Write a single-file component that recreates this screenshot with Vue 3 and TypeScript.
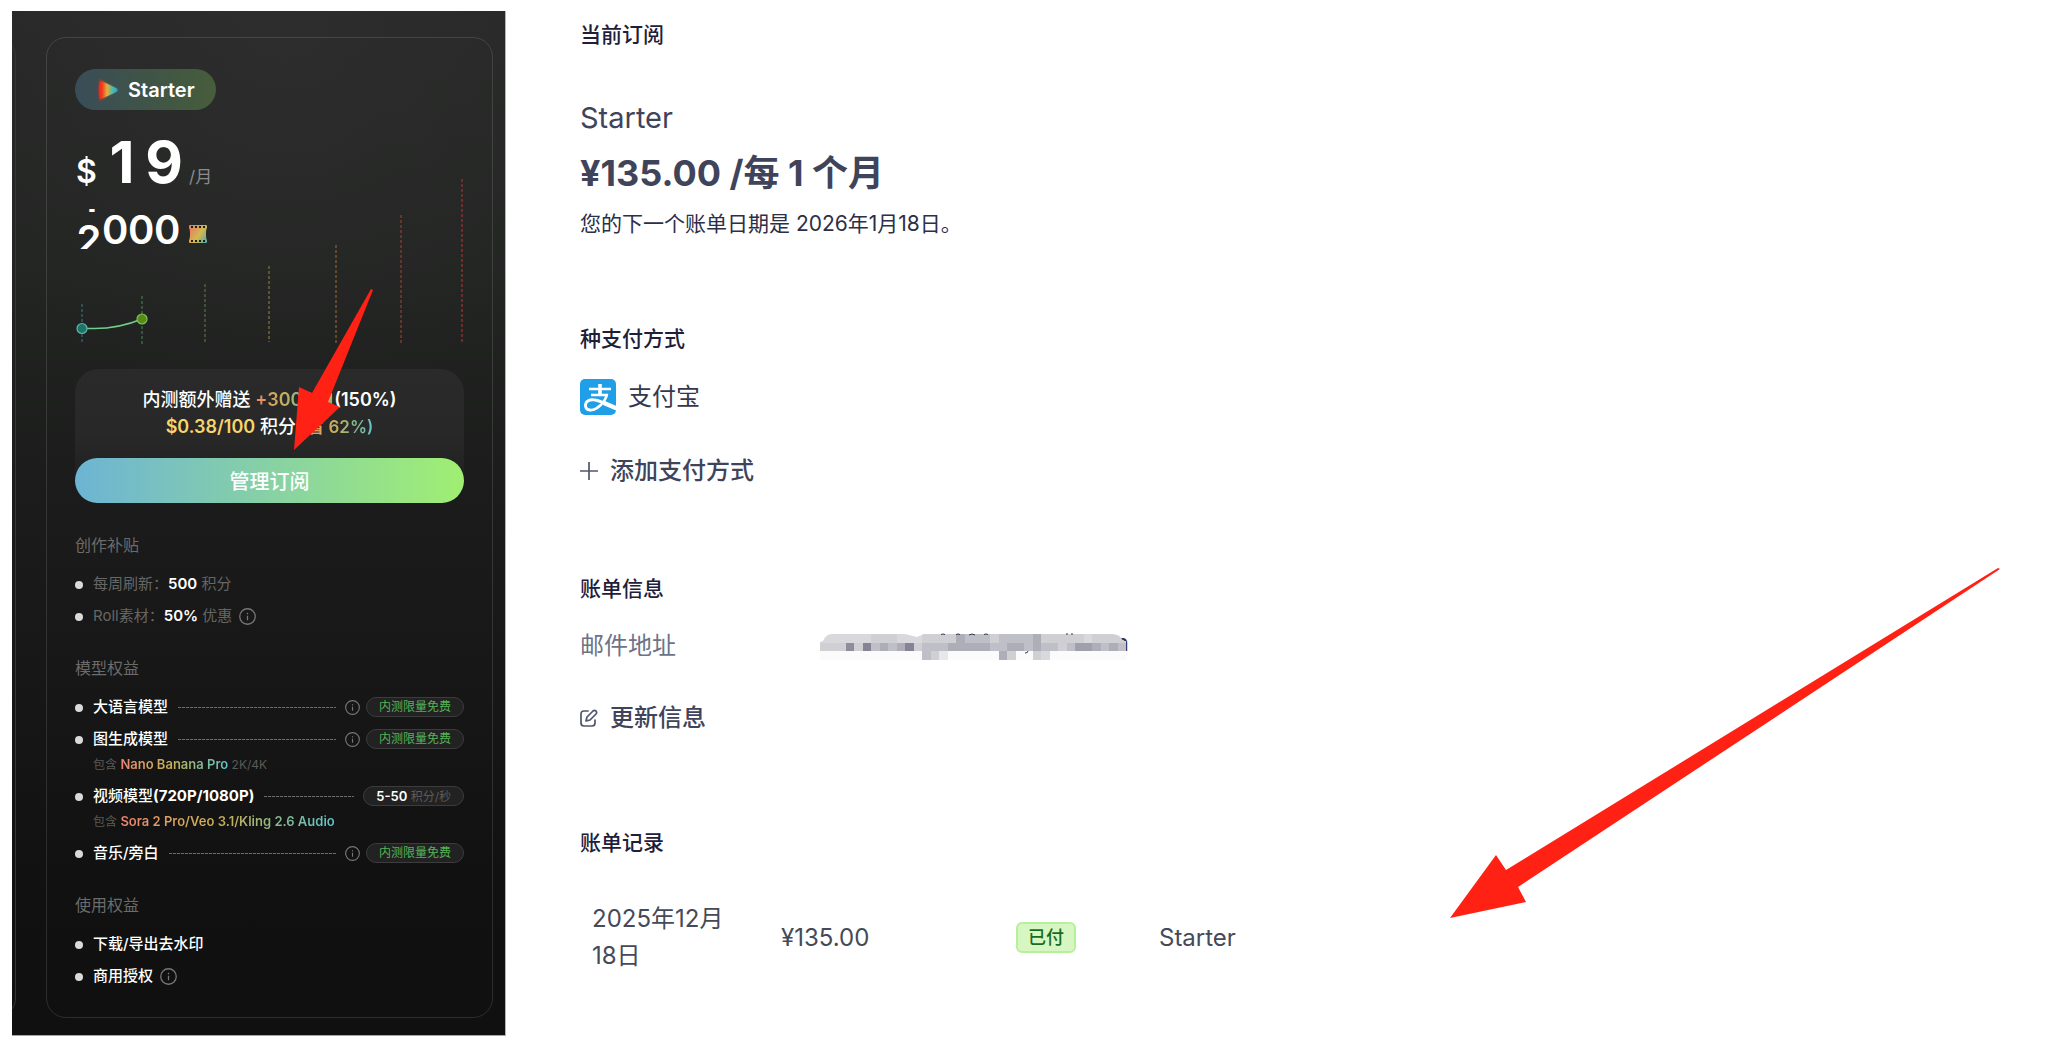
<script setup lang="ts">
interface Benefit {
  label: string
  spec?: string
  badge?: string
  rate?: string
  include?: string
  suffix?: string
}

interface Guide {
  x: number
  top: number
  bottom: number
  color: string
}

// Each wheel holds the digits stacked in one column; offset is how far it has rolled.
const wheels = [
  { digits: ['1', '2'], offset: -32 },
  { digits: ['0'], offset: 0 },
  { digits: ['0'], offset: 0 },
  { digits: ['0'], offset: 0 },
]

const guides: Guide[] = [
  { x: 7, top: 125, bottom: 163, color: '#2f5a66' },
  { x: 67, top: 117, bottom: 165, color: '#3c6440' },
  { x: 130, top: 105, bottom: 165, color: '#4c5c38' },
  { x: 194, top: 87, bottom: 163, color: '#6b6236' },
  { x: 261, top: 66, bottom: 165, color: '#74502f' },
  { x: 326, top: 36, bottom: 165, color: '#763a30' },
  { x: 387, top: 0, bottom: 164, color: '#86302c' },
]

const models: Benefit[] = [
  { label: '大语言模型', badge: '内测限量免费' },
  { label: '图生成模型', badge: '内测限量免费', include: 'Nano Banana Pro', suffix: '2K/4K' },
  { label: '视频模型', spec: '(720P/1080P)', rate: '5-50', include: 'Sora 2 Pro/Veo 3.1/Kling 2.6 Audio' },
  { label: '音乐/旁白', badge: '内测限量免费' },
]

// Brightness level per block of the redacted address, 0 = empty, 9 = darkest.
const mosaicRows = [
  '222222333222333354443444453333323333',
  '333738454583444555554455454434665454',
  '000000000000431000000530032000000000',
]
const shades = ['#fbfbfc', '#e8e8eb', '#d9d9dd', '#cfcfd4', '#bfbfc8', '#aeaeb8', '#a09fac', '#8e8d9b', '#858394', '#777']
const mosaic = mosaicRows.flatMap((row, r) =>
  row.split('').map((c, i) => ({
    x: Math.round((i * 306) / 36),
    y: 1 + r * 8 + (r > 0 ? 1 : 0),
    fill: shades[Number(c)],
  })),
)
</script>

<template>
  <div class="page">
    <aside class="panel">
      <div class="neighbour"></div>
      <section class="card">
        <div class="plan">
          <svg width="24" height="26" viewBox="0 0 24 26" aria-hidden="true">
            <defs>
              <linearGradient id="play" x1="0" x2="1">
                <stop offset="0" stop-color="#f0201c" />
                <stop offset="0.2" stop-color="#f0401f" />
                <stop offset="0.45" stop-color="#e8ae3c" />
                <stop offset="0.7" stop-color="#5fb89a" />
                <stop offset="1" stop-color="#22a9d8" />
              </linearGradient>
              <filter id="glow" x="-30%" y="-30%" width="160%" height="160%">
                <feGaussianBlur stdDeviation="1.3" />
              </filter>
            </defs>
            <path d="M3 2 Q7 3 11 7 L21 12 Q23 13 21 14 L11 19 Q7 23 3 24 Z" fill="url(#play)" opacity="0.6" filter="url(#glow)" />
            <path d="M4 4 Q8 5 20 11 Q23 13 20 15 Q8 21 4 22 Q1 13 4 4 Z" fill="url(#play)" />
          </svg>
          <span>Starter</span>
        </div>

        <div class="hero">
          <svg class="chart" viewBox="0 0 389 165" aria-hidden="true">
            <line
              v-for="g in guides"
              :key="g.x"
              :x1="g.x"
              :x2="g.x"
              :y1="g.top"
              :y2="g.bottom"
              :stroke="g.color"
              stroke-width="1.6"
              stroke-dasharray="3 2"
            />
            <path d="M7 149 Q38 152 67 140" fill="none" stroke="#6fd08c" stroke-width="1.5" />
            <circle cx="7" cy="149.500" r="5" fill="#1d7565" stroke="#62b3b3" stroke-width="1.2" />
            <circle cx="67" cy="140" r="5" fill="#588a17" stroke="#7cc45a" stroke-width="1.2" />
          </svg>
          <div class="price">
            <span class="currency">$</span>
            <span class="amount"><b>1</b><b>9</b></span>
            <span class="period">/月</span>
          </div>
          <div class="credits">
            <span v-for="(w, i) in wheels" :key="i" class="wheel">
              <span class="strip" :style="{ marginTop: w.offset + 'px' }">
                <i v-for="d in w.digits" :key="d">{{ d }}</i>
              </span>
            </span>
            <svg class="film" width="18" height="20" viewBox="0 0 18 20" aria-hidden="true">
              <defs>
                <linearGradient id="film" x1="0" y1="0.2" x2="1" y2="0.9">
                  <stop offset="0" stop-color="#e27f62" />
                  <stop offset="0.55" stop-color="#d3b950" />
                  <stop offset="1" stop-color="#5aa9a6" />
                </linearGradient>
              </defs>
              <path d="M1 1 H17 Q18 1 18 2 V4 Q17 5 17 10 Q17 15 18 16 V18 Q18 19 17 19 H1 Q0 19 0 18 V16 Q1 15 1 10 Q1 5 0 4 V2 Q0 1 1 1Z" fill="url(#film)" />
              <path d="M2 3h2M6 3h2M10 3h2M14 3h2M2 17h2M6 17h2M10 17h2M14 17h2" stroke="#1f1d18" stroke-width="2" />
            </svg>
          </div>
        </div>

        <div class="bonus">
          <p>
            内测额外赠送 <span class="num rainbow">+3000</span>
            <svg class="reel" width="18" height="18" viewBox="0 0 18 20" aria-hidden="true"><rect y="1" width="18" height="18" rx="1" fill="url(#film)" /></svg>
            <span class="num">(150%)</span>
          </p>
          <p><span class="num gold">$0.38/100</span> 积分 <span class="rainbow saving">(省 62%)</span></p>
          <button type="button" class="manage">管理订阅</button>
        </div>

        <h3>创作补贴</h3>
        <ul>
          <li><div class="row muted">每周刷新：<strong>500</strong> 积分</div></li>
          <li>
            <div class="row muted">Roll素材：<strong>50%</strong> 优惠<svg class="info" width="17" height="17" viewBox="0 0 16 16"><circle cx="8" cy="8" r="7.300" /><path d="M8 7.200V11.500M8 4.500V5.800" /></svg></div>
          </li>
        </ul>

        <h3>模型权益</h3>
        <ul>
          <li v-for="m in models" :key="m.label">
            <div class="row">
              <span>{{ m.label }}<b v-if="m.spec">{{ m.spec }}</b></span>
              <span class="leader"></span>
              <svg v-if="m.badge" class="info small" width="15" height="15" viewBox="0 0 16 16"><circle cx="8" cy="8" r="7.300" /><path d="M8 7.200V11.500M8 4.500V5.800" /></svg>
              <span v-if="m.badge" class="badge free">{{ m.badge }}</span>
              <span v-else class="badge"><strong>{{ m.rate }}</strong> 积分/秒</span>
            </div>
            <p v-if="m.include" class="include">
              包含 <b class="rainbow">{{ m.include }}</b> {{ m.suffix }}
            </p>
          </li>
        </ul>

        <h3>使用权益</h3>
        <ul>
          <li><div class="row">下载/导出去水印</div></li>
          <li>
            <div class="row">商用授权<svg class="info" width="17" height="17" viewBox="0 0 16 16"><circle cx="8" cy="8" r="7.300" /><path d="M8 7.200V11.500M8 4.500V5.800" /></svg></div>
          </li>
        </ul>
      </section>
    </aside>

    <main class="billing">
      <section>
        <h2>当前订阅</h2>
        <p class="product">Starter</p>
        <p class="cost">¥135.00 /每 1 个月</p>
        <p class="next">您的下一个账单日期是 2026年1月18日。</p>
      </section>

      <section>
        <h2>种支付方式</h2>
        <div class="method">
          <svg width="36" height="36" viewBox="0 0 36 36" aria-hidden="true">
            <defs><clipPath id="tile"><rect width="36" height="36" rx="5" /></clipPath></defs>
            <g clip-path="url(#tile)">
              <rect width="36" height="36" fill="#1f9fe8" />
              <g fill="none" stroke="#fff" stroke-width="2.600">
                <path d="M9 10H31M11 16H28" />
                <path d="M20 5V16" stroke-width="3.600" />
                <path d="M27 15C26 20 22 26 17 29C13 32 6 32 5.500 27C5 22 10 20 15 21C21 22 28 26 38 30" stroke-width="2.800" />
                <path d="M24 24L38 30" stroke-width="4.400" />
              </g>
            </g>
          </svg>
          <span>支付宝</span>
        </div>
        <button type="button" class="action add">
          <svg width="18" height="18" viewBox="0 0 18 18" aria-hidden="true"><path d="M9 0V18M0 9H18" stroke="#50556b" stroke-width="1.700" /></svg>
          添加支付方式
        </button>
      </section>

      <section>
        <h2>账单信息</h2>
        <dl>
          <dt>邮件地址</dt>
          <dd>
            <svg width="310" height="27" viewBox="0 0 310 27" role="img" aria-label="邮件地址">
              <defs>
                <clipPath id="smear"><path d="M0 9L3 8Q6 1 12 1H85L97 4L104 1H292Q300 1 303 8H306V27H0Z" /></clipPath>
              </defs>
              <text x="309" y="18" text-anchor="end" class="tail">n</text>
              <rect x="290" y="9" width="13" height="9" fill="#c5c5cc" />
              <g clip-path="url(#smear)">
                <rect v-for="(b, i) in mosaic" :key="i" :x="b.x" :y="b.y" width="9" height="9" :fill="b.fill" />
              </g>
              <path d="M121 1.500q2-1 4 0M136 1.500q2-1 4 0M149 2q3-2 6 0M164 1.500q2-1 4 0M246 1h2M251 1h2M205 20q3 0 3-2" fill="none" stroke="#35374e" stroke-width="1" />
            </svg>
          </dd>
        </dl>
        <button type="button" class="action edit">
          <svg width="18" height="18" viewBox="0 0 18 18" fill="none" stroke="#50556b" stroke-width="1.700" stroke-linejoin="round" stroke-linecap="round" aria-hidden="true">
            <path d="M8 2H4Q1 2 1 5V14Q1 17 4 17H12Q15 17 15 14V11" />
            <path d="M6 12L7 8L13 2Q14.500 .8 16 2Q17.200 3.500 16 5L10 11Z" />
          </svg>
          更新信息
        </button>
      </section>

      <section class="history">
        <h2>账单记录</h2>
        <table>
          <tbody>
            <tr>
              <td class="date">2025年12月18日</td>
              <td class="sum">¥135.00</td>
              <td class="state"><span>已付</span></td>
              <td>Starter</td>
            </tr>
          </tbody>
        </table>
      </section>
    </main>

    <svg class="arrow first" width="80" height="162" viewBox="0 0 80 162" aria-hidden="true">
      <path d="M78 0L80 1L35 113L47 118L1 161L6 98L19 104Z" />
    </svg>
    <svg class="arrow second" width="550" height="350" viewBox="0 0 550 350" aria-hidden="true">
      <path d="M548 0L550 1L68 319L76 334L0 350L46 287L56 302Z" />
    </svg>
  </div>
</template>

<style>
body {
  margin: 0;
  background: #fff;
}
</style>

<style scoped>
.page {
  position: relative;
  box-sizing: border-box;
  min-height: 100vh;
  display: grid;
  grid-template-columns: minmax(494px, 23%) 1fr;
  padding: 11px 12px 8px;
  font-family: Inter, "Noto Sans CJK SC", sans-serif;
}
h2,
h3,
p,
ul,
dl,
dd {
  margin: 0;
  padding: 0;
}
.panel {
  position: relative;
  display: flex;
  overflow: hidden;
  padding: 26px 12px 17px 34px;
  border-right: 1px solid #b5b5b5;
  border-bottom: 1px solid #a5a5a5;
  background: radial-gradient(circle at 55% 2%, rgba(70, 66, 70, 0.2), transparent 36%),
    linear-gradient(#272827 0%, #232523 25%, #1b1c1b 45%, #161716 65%, #101110 85%, #0f100f 100%);
  color: #fff;
}
.neighbour {
  position: absolute;
  top: 26px;
  bottom: 17px;
  left: -40px;
  width: 42px;
  border: 1px solid #353635;
  border-radius: 20px;
}
.card {
  flex: 1;
  box-sizing: border-box;
  padding: 31px 28px 24px;
  border: 1px solid rgba(255, 255, 255, 0.12);
  border-radius: 20px;
}
.plan {
  display: inline-flex;
  align-items: center;
  gap: 8px;
  height: 41px;
  padding: 0 21px;
  border-radius: 21px;
  background: linear-gradient(90deg, #394d58, #405546 55%, #475d3b);
  font-size: 20px;
  font-weight: 600;
  vertical-align: top;
}
.hero {
  position: relative;
  padding: 22px 0 95px;
}
.chart {
  position: absolute;
  left: 0;
  bottom: 0;
  width: 100%;
}
.price {
  position: relative;
  display: flex;
  align-items: baseline;
  height: 60px;
  padding-left: 1px;
  line-height: 60px;
}
.currency {
  width: 25px;
  font-size: 32px;
  font-weight: 600;
}
.amount {
  display: flex;
  font-size: 58px;
}
.amount b {
  width: 42px;
  font-weight: 700;
  text-align: center;
}
.period {
  margin-left: 4px;
  font-size: 17px;
  color: #8c8c8c;
}
.credits {
  position: relative;
  display: flex;
  margin-top: 17px;
  padding-left: 1px;
}
.wheel {
  width: 26px;
  height: 40px;
  overflow: hidden;
}
.strip {
  display: block;
}
.strip i {
  display: block;
  font-size: 40px;
  font-style: normal;
  font-weight: 600;
  line-height: 42px;
  text-align: center;
}
.film {
  margin: 15px 0 0 9px;
}
.bonus {
  margin-top: 25px;
  padding-top: 17px;
  border-radius: 24px;
  background: linear-gradient(#2a2a2a 0%, #272827 50%, #1c1d1c 95%);
  text-align: center;
  font-size: 18px;
  font-weight: 500;
  line-height: 27px;
}
.bonus p {
  height: 27px;
}
.num {
  font-size: 18px;
  font-weight: 600;
}
.saving {
  font-size: 17px;
}
.reel {
  margin: 0 1px;
  vertical-align: middle;
}
.rainbow {
  background: linear-gradient(90deg, #ee8272, #d8a362 25%, #c4b058 50%, #8bb98a 72%, #62c4cc);
  -webkit-background-clip: text;
  background-clip: text;
  color: transparent;
  font-weight: 600;
}
.gold {
  color: #f7d56b;
}
.manage {
  display: block;
  width: 100%;
  height: 45px;
  margin-top: 18px;
  border: 0;
  border-radius: 23px;
  background: linear-gradient(90deg, #6db4d4, #87d1a5 50%, #a0ef72);
  color: #fff;
  font: 500 20px Inter, "Noto Sans CJK SC", sans-serif;
}
h3 {
  margin: 24px 0 11px;
  font-size: 16px;
  font-weight: 400;
  line-height: 24px;
  color: #6b6b6b;
}
.bonus + h3 {
  margin-top: 30px;
}
ul {
  list-style: none;
}
li {
  position: relative;
  padding-left: 18px;
}
li::before {
  content: "";
  position: absolute;
  top: 13px;
  left: 0;
  width: 8px;
  height: 8px;
  border-radius: 50%;
  background: #dadada;
}
.row {
  display: flex;
  align-items: center;
  height: 32px;
  font-size: 15px;
  font-weight: 500;
  line-height: 32px;
  white-space: pre;
}
.row b {
  font-weight: 700;
}
.muted {
  color: #666;
  font-weight: 400;
}
strong {
  color: #fff;
  font-weight: 600;
}
.info {
  margin-left: 7px;
  fill: none;
  stroke: #777;
  stroke-width: 1.2;
}
.info.small {
  margin: 0 6px 0 0;
}
.leader {
  flex: 1;
  height: 1px;
  margin: 0 9px 0 10px;
  background: repeating-linear-gradient(90deg, #6a6a6a 0 3px, #242424 3px 4px);
}
.badge {
  display: block;
  box-sizing: border-box;
  height: 20px;
  padding: 0 12px;
  border: 1px solid #3c3c3c;
  border-radius: 10px;
  background: #222;
  color: #5c5c5c;
  font-size: 12px;
  font-weight: 400;
  line-height: 18px;
}
.badge strong {
  font-size: 13px;
}
.badge.free {
  color: #55b355;
}
.include {
  height: 18px;
  padding-bottom: 7px;
  color: #5a5a5a;
  font-size: 12px;
  line-height: 18px;
}
.include b {
  font-size: 13px;
}
.billing {
  padding: 9px 0 0 74px;
  color: #3f445b;
  font-size: 24px;
  line-height: 36px;
}
section + section {
  margin-top: 85px;
}
.billing .history {
  margin-top: 92px;
}
h2 {
  font-size: 21px;
  font-weight: 500;
  line-height: 30px;
  color: #1e2039;
}
.product {
  margin-top: 50px;
  font-size: 29px;
}
.cost {
  margin-top: 13px;
  font-size: 36px;
  font-weight: 700;
  line-height: 48px;
}
.next {
  margin-top: 12px;
  font-size: 21px;
  line-height: 30px;
  color: #2c2f47;
}
.method {
  display: flex;
  align-items: center;
  gap: 12px;
  margin-top: 25px;
  color: #35374e;
}
.action {
  display: flex;
  align-items: center;
  gap: 12px;
  padding: 0;
  border: 0;
  background: none;
  color: #3f445b;
  font: 500 24px/36px Inter, "Noto Sans CJK SC", sans-serif;
}
.add {
  margin-top: 38px;
}
.edit {
  margin-top: 36px;
}
dl {
  display: grid;
  grid-template-columns: 240px 1fr;
  align-items: center;
  margin-top: 24px;
}
dt {
  color: #6c7388;
}
dd svg {
  display: block;
}
.tail {
  fill: #35374e;
  font-size: 24px;
}
table {
  margin-top: 42px;
  border-collapse: collapse;
  line-height: 37px;
}
td {
  padding: 0 12px;
  color: #454a58;
}
td.date {
  width: 141px;
  padding-right: 36px;
}
td.sum {
  width: 211px;
}
td.state {
  width: 119px;
}
td.state span {
  display: block;
  box-sizing: border-box;
  width: 60px;
  border: 2px solid #b7ef9c;
  border-radius: 6px;
  background: #d7f7c2;
  color: #1a6c1c;
  font-size: 18px;
  font-weight: 500;
  line-height: 27px;
  text-align: center;
}
.arrow {
  position: absolute;
  fill: #ff2113;
  pointer-events: none;
}
.first {
  left: 293px;
  top: 289px;
}
.second {
  left: 1450px;
  top: 568px;
}
</style>
